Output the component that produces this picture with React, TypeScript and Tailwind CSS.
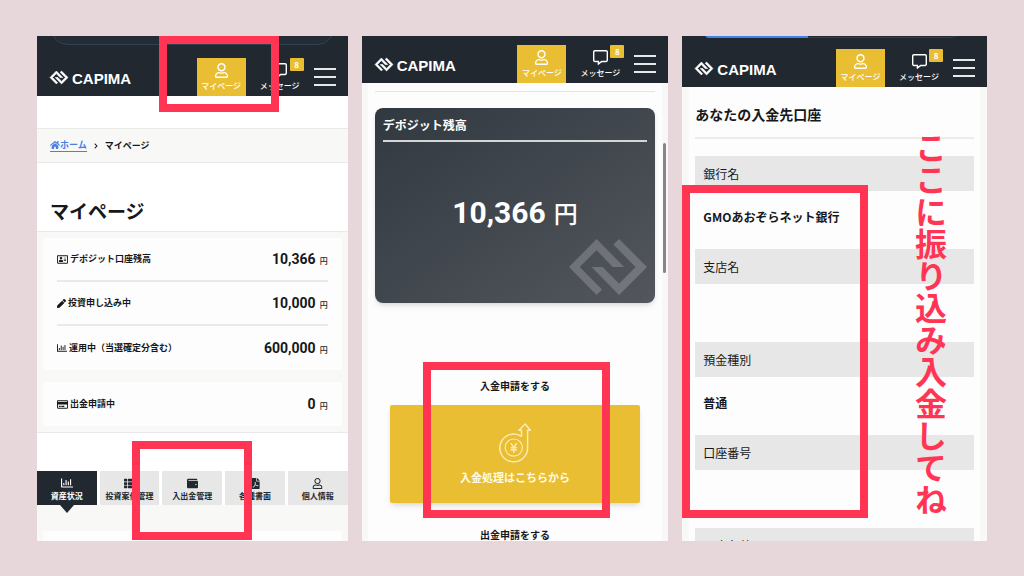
import type { ReactNode } from "react";
import clsx from "clsx";
import {
  FaChevronRight,
  FaFilePdf,
  FaHome,
  FaPen,
  FaRegAddressCard,
  FaRegChartBar,
  FaRegCommentAlt,
  FaRegCreditCard,
  FaRegUser,
  FaThList,
  FaWallet,
} from "react-icons/fa";

interface BalanceRowProps {
  icon: ReactNode;
  label: string;
  amount: string;
}

const tabs = [
  { label: "資産状況", icon: <FaRegChartBar size={12} /> },
  { label: "投資案件管理", icon: <FaThList size={11} /> },
  { label: "入出金管理", icon: <FaWallet size={11} /> },
  { label: "各種書面", icon: <FaFilePdf size={11} /> },
  { label: "個人情報", icon: <FaRegUser size={11} /> },
];

const accountFields = [
  { label: "銀行名", value: "GMOあおぞらネット銀行" },
  { label: "支店名", value: "" },
  { label: "預金種別", value: "普通" },
  { label: "口座番号", value: "" },
  { label: "口座名義", value: "" },
];

function LogoMark({ className }: { className?: string }) {
  return (
    <svg viewBox="0 0 232 166" fill="currentColor" className={className} aria-hidden="true">
      <path d="M0 83 82 0l82 83h-34L82 33 32 83l66 67-16 16z" />
      <path d="M232 83l-83 83-82-83h33l49 50 49-50-66-67 17-16z" />
    </svg>
  );
}

function DepositIcon() {
  return (
    <svg
      viewBox="0 0 32 40"
      fill="none"
      stroke="currentColor"
      strokeWidth="1.5"
      strokeLinejoin="round"
      strokeLinecap="round"
      className="h-10 w-8 text-[#fbeab4]"
      aria-hidden="true"
    >
      <path d="M22.5 13.4V7.2h-2.6L26.2 1l5.2 6.2h-2.8v17A13.9 13.9 0 1 1 22.5 13.4z" />
      <circle cx="14.8" cy="24.6" r="8.6" strokeWidth="1.2" />
      <path d="M12.2 20.6l2.6 4 2.6-4M14.8 24.6v4.6M12.2 24.8h5.2M12.2 27h5.2" />
    </svg>
  );
}

function Header({ className, children }: { className: string; children?: ReactNode }) {
  return (
    <header
      className={clsx(
        "relative flex shrink-0 flex-col justify-end overflow-hidden bg-[#212830] text-white",
        className,
      )}
    >
      {children}
      <div className="flex h-[38px] items-center pr-3 pl-[13px]">
        <a href="#top" className="flex items-center gap-1">
          <LogoMark className="h-[13px] w-[18px] overflow-visible stroke-current stroke-[8px]" />
          <span className="pt-1 font-['Liberation_Sans',sans-serif] text-[15px] leading-5 font-bold">
            CAPIMA
          </span>
        </a>

        <a
          href="#mypage"
          className="ml-auto flex h-full w-[49px] shrink-0 flex-col items-center gap-1 bg-[#e9be32] pt-[5px]"
        >
          <FaRegUser size={15} />
          <span className="text-[8px] leading-[8px] font-medium">マイページ</span>
        </a>

        <a
          href="#messages"
          className="relative ml-3.5 flex h-full w-10 shrink-0 flex-col items-center gap-1 pt-[5px]"
        >
          <FaRegCommentAlt size={15} />
          <span className="text-[8px] leading-[8px] font-medium">メッセージ</span>
          <span className="absolute top-0 left-[30px] h-[13px] w-3.5 rounded-[1px] bg-[#e9be32] text-center text-[8px] leading-[13px] font-bold">
            8
          </span>
        </a>

        <button type="button" aria-label="メニュー" className="ml-3.5 flex w-[22px] flex-col gap-1.5">
          <span className="h-0.5 bg-[#e6e8ea]" />
          <span className="h-0.5 bg-[#e6e8ea]" />
          <span className="h-0.5 bg-[#e6e8ea]" />
        </button>
      </div>
    </header>
  );
}

function BalanceRow({ icon, label, amount }: BalanceRowProps) {
  return (
    <div className="flex h-11 items-center justify-between">
      <dt className="flex items-center gap-0.5 text-[9px] font-bold">
        {icon}
        {label}
      </dt>
      <dd className="flex items-baseline gap-1">
        <span className="font-[Roboto,sans-serif] text-sm font-bold">{amount}</span>
        <span className="text-[8px] font-medium">円</span>
      </dd>
    </div>
  );
}

function Highlight({ className }: { className: string }) {
  return (
    <div
      className={clsx("pointer-events-none absolute border-8 border-[#ff3553]", className)}
      aria-hidden="true"
    />
  );
}

function MyPageScreen() {
  return (
    <section className="relative overflow-hidden bg-white">
      <Header className="h-[60px]">
        <div className="absolute inset-x-3.5 -top-6 h-[33px] rounded-[20px] border border-[#2f4254] bg-[#242d36]" />
      </Header>

      <nav className="mt-8 flex h-[35px] items-center gap-1.5 border-y border-[#e9e9e8] bg-[#f8f8f7] pl-[13px] text-[9px] leading-3 font-bold">
        <a href="#home" className="flex items-center border-b border-[#4a7fe8] text-[#4a7fe8]">
          <FaHome size={10} />
          ホーム
        </a>
        <FaChevronRight size={6} />
        <span>マイページ</span>
      </nav>

      <h1 className="mt-[34px] pl-[13px] text-[19px] leading-7 font-bold">マイページ</h1>

      <div className="mt-1.5 border-y border-[#e9e9e8] bg-[#f8f8f7] px-1.5 py-1.5">
        <dl className="divide-y-2 divide-[#e9e9e9] bg-[#fdfdfd] px-3.5">
          <BalanceRow icon={<FaRegAddressCard size={11} />} label="デポジット口座残高" amount="10,366" />
          <BalanceRow icon={<FaPen size={9} />} label="投資申し込み中" amount="10,000" />
          <BalanceRow
            icon={<FaRegChartBar size={10} />}
            label="運用中（当選確定分含む）"
            amount="600,000"
          />
        </dl>
        <dl className="mt-3 bg-[#fdfdfd] px-3.5">
          <BalanceRow icon={<FaRegCreditCard size={11} />} label="出金申請中" amount="0" />
        </dl>
      </div>

      <div className="mt-[38px] grid grid-cols-5 gap-[3px]">
        {tabs.map((tab, index) => (
          <button
            key={tab.label}
            type="button"
            className={clsx(
              "relative flex h-[34px] flex-col items-center gap-0.5 pt-1.5 text-[8px] leading-[10px] font-bold whitespace-nowrap",
              index === 0 ? "bg-[#212830] text-white" : "bg-[#e7e7e7] text-[#212830]",
            )}
          >
            <span className="flex h-3 items-center">{tab.icon}</span>
            {tab.label}
            {index === 0 && (
              <span className="absolute top-full left-1/2 z-10 -translate-x-1/2 border-x-[7px] border-t-[8px] border-x-transparent border-t-[#212830]" />
            )}
          </button>
        ))}
      </div>

      <div className="h-40 bg-[#f8f8f7] px-1.5 pt-[26px]">
        <div className="h-full bg-[#fdfdfd]" />
      </div>

      <Highlight className="top-0 left-[122px] h-[76px] w-[120px]" />
      <Highlight className="top-[405px] left-[95px] h-[99px] w-[120px]" />
    </section>
  );
}

function DepositScreen() {
  return (
    <section className="relative overflow-hidden bg-[#f8f8f8]">
      <Header className="h-[47px]" />

      <div className="mx-1.5 flex h-full flex-col bg-[#fdfdfd] px-[7px] pt-2">
        <hr className="border-[#e4e4e4]" />

        <div className="relative mt-4 h-[195px] rounded-lg bg-linear-to-br from-[#313940] to-[#53565d] px-2 text-white shadow-md">
          <h2 className="border-b-2 border-[#d3d5d7] pt-2 pb-1.5 text-[12px] leading-[18px] font-bold">
            デポジット残高
          </h2>
          <p className="mt-[51px] flex items-baseline justify-center gap-2 leading-10">
            <span className="font-[Roboto,sans-serif] text-[30px] font-bold">10,366</span>
            <span className="text-2xl leading-10 font-medium">円</span>
          </p>
          <LogoMark className="absolute right-2 bottom-2 h-[56px] w-[78px] text-white/20" />
        </div>

        <div className="mt-[75px] px-[15px] text-center">
          <h3 className="text-[10px] leading-4 font-bold">入金申請をする</h3>
          <button
            type="button"
            className="mt-[11px] flex h-[98px] w-full flex-col items-center gap-1.5 rounded-[2px] bg-[#e9be32] pt-[18px] text-[11px] leading-4 font-bold text-[#fffbe9] shadow-md"
          >
            <DepositIcon />
            入金処理はこちらから
          </button>
          <h3 className="mt-6 text-[10px] leading-4 font-bold">出金申請をする</h3>
        </div>
      </div>

      <div className="absolute top-[107px] right-0.5 h-[130px] w-[3px] rounded-full bg-[#858788]" />
      <Highlight className="top-[326px] left-[61px] h-[156px] w-[187px]" />
    </section>
  );
}

function BankAccountScreen() {
  return (
    <section className="relative overflow-hidden bg-[#f8f8f7]">
      <Header className="h-[51px]">
        <div className="absolute -top-6 right-6 left-4 h-[26px] rounded-full border-b border-[#2f4254]" />
        <div className="absolute top-0 left-6 h-0.5 w-1/3 rounded-bl-full bg-[#3f83e6]" />
      </Header>

      <div className="mx-[7px] h-full bg-[#fdfdfd] px-1.5 pt-4">
        <h2 className="border-b-2 border-[#ececec] pb-3 text-sm leading-[22px] font-bold">
          あなたの入金先口座
        </h2>
        <dl className="mt-[17px] text-[12px]">
          {accountFields.map((field) => (
            <div key={field.label}>
              <dt className="h-[35px] bg-[#e7e7e7] px-2 leading-[35px]">{field.label}</dt>
              <dd className="h-[58px] px-2 pt-4 leading-5 font-bold">{field.value}</dd>
            </div>
          ))}
        </dl>
      </div>

      <Highlight className="top-[149px] left-0 h-[333px] w-[186px]" />
      <p className="absolute top-24 right-10 text-[32px] leading-8 font-bold whitespace-nowrap text-[#ff3553] [writing-mode:vertical-rl]">
        ここに振り込み入金してね
      </p>
    </section>
  );
}

export default function App() {
  return (
    <main className="grid h-screen grid-cols-[311fr_307fr_305fr] grid-rows-1 gap-3.5 bg-[#e7d7da] px-[37px] pt-9 pb-[35px] font-['Noto_Sans_CJK_JP',sans-serif] text-[#16181b]">
      <MyPageScreen />
      <DepositScreen />
      <BankAccountScreen />
    </main>
  );
}
